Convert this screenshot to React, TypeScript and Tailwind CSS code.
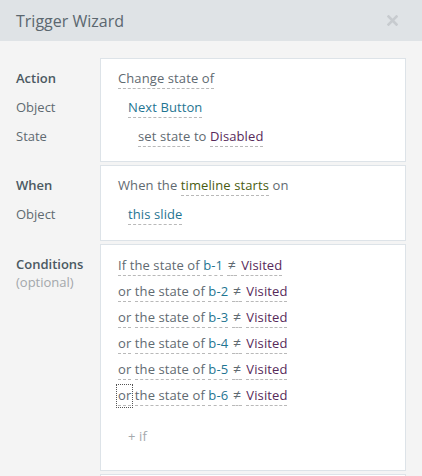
import React from 'react';

const Seg = ({
  children,
  color = 'text-[#5f6a71]',
  focus = false,
  extra = '',
}: {
  children: React.ReactNode;
  color?: string;
  focus?: boolean;
  extra?: string;
}) => (
  <span
    className={`${color} border-b border-dashed border-[#b9b9b9] pb-[1px] ${extra} ${
      focus ? 'outline outline-1 outline-dotted outline-[#555] outline-offset-[1px]' : ''
    }`}
  >
    {children}
  </span>
);

const blue = 'text-[#1f7592]';
const purple = 'text-[#57295a]';
const green = 'text-[#4a5c10]';

function Section({
  labels,
  children,
  rowClass,
}: {
  labels: React.ReactNode;
  children: React.ReactNode;
  rowClass?: string;
}) {
  return (
    <div className="flex">
      <div className={`w-[100px] shrink-0 pl-4 ${rowClass ?? ''}`}>{labels}</div>
      <div className="flex-1 mr-4 bg-white border border-[#dde3e8]">{children}</div>
    </div>
  );
}

export default function App() {
  const conditions = [1, 2, 3, 4, 5, 6];

  return (
    <div
      className="w-[422px] h-[476px] overflow-hidden bg-[#f4f4f4] text-[13px] text-[#5f6a71]"
      style={{ fontFamily: '"Open Sans", "Noto Sans", sans-serif' }}
    >
      {/* header */}
      <div className="h-[41px] bg-[#dfe3e6] flex items-center justify-between pl-4 pr-[24px]">
        <span className="text-[16px] text-[#5b676f]">Trigger Wizard</span>
        <svg width="11" height="11" viewBox="0 0 11 11">
          <path d="M1.5 1.5 L9.5 9.5 M9.5 1.5 L1.5 9.5" stroke="#c7cbcf" strokeWidth="2.6" strokeLinecap="square" />
        </svg>
      </div>

      <div className="flex flex-col gap-[3px] pt-[17px]">
        {/* action */}
        <Section
          rowClass="pt-[6px]"
          labels={
            <>
              <div className="h-[29px] leading-[29px] font-semibold text-[#4b5962]">Action</div>
              <div className="h-[29px] leading-[29px]">Object</div>
              <div className="h-[29px] leading-[29px]">State</div>
            </>
          }
        >
          <div className="pt-[5px] pb-[10px] pl-[17px] tracking-[0.1px]">
            <div className="h-[29px] leading-[29px] whitespace-nowrap">
              <Seg>Change state of</Seg>
            </div>
            <div className="h-[29px] leading-[29px] pl-[10px] whitespace-nowrap">
              <Seg color={blue}>Next Button</Seg>
            </div>
            <div className="h-[29px] leading-[29px] pl-[20px] whitespace-nowrap">
              <Seg>set state</Seg> to <Seg color={purple}>Disabled</Seg>
            </div>
          </div>
        </Section>

        {/* when */}
        <Section
          rowClass="pt-[6px]"
          labels={
            <>
              <div className="h-[29px] leading-[29px] font-semibold text-[#4b5962]">When</div>
              <div className="h-[29px] leading-[29px]">Object</div>
            </>
          }
        >
          <div className="pt-[5px] pb-[11px] pl-[17px] tracking-[0.1px]">
            <div className="h-[29px] leading-[29px] whitespace-nowrap">
              When the <Seg color={green}>timeline starts</Seg> on
            </div>
            <div className="h-[29px] leading-[29px] pl-[10px] whitespace-nowrap">
              <Seg color={blue}>this slide</Seg>
            </div>
          </div>
        </Section>

        {/* conditions */}
        <Section
          rowClass="pt-[7px]"
          labels={
            <>
              <div className="h-[26px] leading-[26px] font-semibold text-[#4b5962]">Conditions</div>
              <div className="leading-[14px] -mt-[2px] text-[#a3a7ab]">(optional)</div>
            </>
          }
        >
          <div className="pt-[7px] pb-[21px] pl-[17px] tracking-[0.1px]">
            {conditions.map((n) => (
              <div key={n} className="h-[26px] leading-[26px] whitespace-nowrap">
                {n === 1 ? (
                  <Seg>If the state of</Seg>
                ) : (
                  <>
                    <Seg focus={n === 6}>or</Seg> <Seg>the state of</Seg>
                  </>
                )}{' '}
                <Seg color={blue}>b-{n}</Seg>
                <Seg extra="mx-[4px] px-[1px] text-[14px]">≠</Seg>
                <Seg color={purple}>Visited</Seg>
              </div>
            ))}
            <div className="h-[26px] leading-[26px] mt-[15px] pl-[10px] text-[#a5a9ad]">+ if</div>
          </div>
        </Section>

        <Section labels={null}>
          <div className="h-[20px]" />
        </Section>
      </div>
    </div>
  );
}
